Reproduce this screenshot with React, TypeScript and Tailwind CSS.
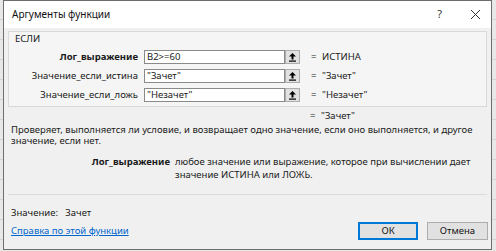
import React from "react";

const font = { fontFamily: '"Noto Sans", "Open Sans", sans-serif' };

const Strip = ({ w }: { w: string }) => (
  <div className={`${w} flex shrink-0 flex-col bg-[#e8e8e8]`}>
    {Array.from({ length: 13 }).map((_, i) => (
      <div key={i} className="h-[20px] shrink-0 border-b border-[#d4d4d4]" />
    ))}
  </div>
);

const RefButton = () => (
  <div className="flex h-[14px] w-[15px] shrink-0 items-center justify-center border border-[#adadad] bg-[#e1e1e1]">
    <svg width="9" height="10" viewBox="0 0 9 10">
      <path d="M4.5 1 L1 4.5 H3.5 V7.5 H5.5 V4.5 H8 Z" fill="#000" />
      <rect x="1" y="8.5" width="7" height="1.2" fill="#000" />
    </svg>
  </div>
);

interface ArgProps {
  label: string;
  value: string;
  result: string;
  bold?: boolean;
}

const ArgRow = ({ label, value, result, bold }: ArgProps) => (
  <div className="flex h-[14px] items-center">
    <div
      className={`w-[129px] shrink-0 pr-[6px] text-right text-[9.5px] text-[#1a1a1a] ${
        bold ? "font-bold" : ""
      }`}
    >
      {label}
    </div>
    <div className="flex h-[14px] w-[141px] shrink-0 items-center border border-[#8a8a8a] bg-white px-[2px] text-[9.5px] text-[#222]">
      {value}
    </div>
    <RefButton />
    <div className="ml-[11px] w-[11px] shrink-0 text-[9.5px] text-[#222]">=</div>
    <div className="text-[9.5px] text-[#222]">{result}</div>
  </div>
);

export default function App() {
  return (
    <div className="flex h-[251px] w-[496px] overflow-hidden bg-[#e8e8e8]" style={font}>
      <Strip w="w-[3px]" />
      <div className="flex h-[250px] w-[489px] shrink-0 flex-col border border-[#6d6d6d] bg-[#f0f0f0]">
        <div className="flex h-[27px] shrink-0 items-center bg-white pl-[8px] pr-[10px]">
          <div className="flex-1 text-[10px] text-[#111]">Аргументы функции</div>
          <div className="mr-[28px] text-[11px] text-[#333]">?</div>
          <svg width="11" height="11" viewBox="0 0 11 11">
            <path d="M1 1 L10 10 M10 1 L1 10" stroke="#333" strokeWidth="1" />
          </svg>
        </div>

        <div className="mx-[4px] mt-[3px] flex h-[76px] shrink-0 flex-col border border-[#d9d9d9] bg-[#f5f5f5] pl-[6px] pt-[1px]">
          <div className="text-[9.5px] leading-[12px] text-[#1a1a1a]">ЕСЛИ</div>
          <div className="mt-[5px] flex flex-col gap-[5px]">
            <ArgRow label="Лог_выражение" value="B2>=60" result="ИСТИНА" bold />
            <ArgRow label="Значение_если_истина" value={'"Зачет"'} result={'"Зачет"'} />
            <ArgRow label="Значение_если_ложь" value={'"Незачет"'} result={'"Незачет"'} />
          </div>
        </div>

        <div className="mt-[2px] flex h-[14px] shrink-0 items-center pl-[306px] text-[9.5px] text-[#222]">
          <span className="w-[11px]">=</span>
          <span>"Зачет"</span>
        </div>

        <div className="mt-[1px] px-[7px] text-[9.5px] leading-[11px] text-[#1a1a1a]">
          Проверяет, выполняется ли условие, и возвращает одно значение, если оно выполняется, и другое
          значение, если нет.
        </div>

        <div className="mt-[9px] flex text-[9.5px] leading-[13px] text-[#1a1a1a]">
          <div className="w-[171px] shrink-0 pr-[5px] text-right font-bold">Лог_выражение</div>
          <div className="w-[300px]">
            любое значение или выражение, которое при вычислении дает значение ИСТИНА или ЛОЖЬ.
          </div>
        </div>

        <div className="mx-[4px] mt-[13px] border-t border-[#dcdcdc]" />

        <div className="mt-[11px] px-[7px] text-[9.5px] text-[#1a1a1a]">
          Значение:&nbsp;&nbsp; Зачет
        </div>

        <div className="mt-[2px] flex items-center pl-[7px] pr-[3px]">
          <span className="flex-1 text-[9.5px] text-[#0066cc] underline">Справка по этой функции</span>
          <button className="h-[18px] w-[60px] border-2 border-[#0078d7] bg-[#e1e1e1] text-[9.5px] text-[#111]">
            ОК
          </button>
          <button className="ml-[9px] h-[18px] w-[61px] border border-[#adadad] bg-[#e1e1e1] text-[9.5px] text-[#111]">
            Отмена
          </button>
        </div>
      </div>
      <Strip w="w-[4px]" />
    </div>
  );
}
